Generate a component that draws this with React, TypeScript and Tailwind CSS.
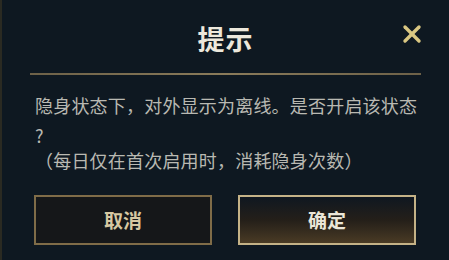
import { X } from "lucide-react";

const FONT = '"Noto Sans CJK SC", "Noto Sans", sans-serif';

export default function App() {
  return (
    <div
      className="w-[449px] h-[260px] bg-[#0e1821] border-l-2 border-[#2a2a22] overflow-hidden"
      style={{ fontFamily: FONT }}
    >
      {/* Header */}
      <div className="relative h-[73px] flex items-center justify-center">
        <span className="text-[27px] font-bold text-[#ece8dc] tracking-[1px] mt-[6px]">提示</span>
        <X className="absolute right-[23px] top-[20px] text-[#d9c782]" size={28} strokeWidth={2.9} />
      </div>
      <div className="mx-[28px] h-[2px] bg-gradient-to-r from-[#6d6148] via-[#8a7b5a] to-[#6d6148]" />

      {/* Body */}
      <div className="px-[33px] pt-[16px] text-[18px] leading-[28px] text-[#b9b9b2] whitespace-nowrap">
        <p className="tracking-[0.2px]">隐身状态下，对外显示为离线。是否开启该状态</p>
        <p className="mt-[2px]">?</p>
        <p className="-mt-[3px] tracking-[0.2px]">（每日仅在首次启用时，消耗隐身次数）</p>
      </div>

      {/* Actions */}
      <div className="flex gap-[26px] px-[32px] mt-[21px]">
        <button className="w-[178px] h-[50px] border-2 border-[#7f6c48] bg-[#151719] text-[19px] font-bold text-[#d6c8a2]">
          取消
        </button>
        <button className="w-[178px] h-[50px] border-2 border-[#c4b287] bg-gradient-to-b from-[#0f1720] via-[#241f19] to-[#4a3b25] text-[19px] font-bold text-[#ebe6d8]">
          确定
        </button>
      </div>
    </div>
  );
}
